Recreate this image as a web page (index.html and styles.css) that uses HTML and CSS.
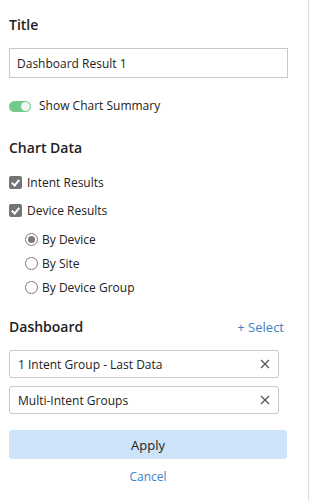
FILE: index.html
```html
<!DOCTYPE html>
<html lang="en">
<head>
    <meta charset="UTF-8">
    <meta name="viewport" content="width=device-width, initial-scale=1.0">
    <title>Chart Settings</title>
    <link rel="stylesheet" href="styles.css">
</head>
<body>
    <div class="settings-panel">
        <div class="section-title">Title</div>
        <input type="text" class="title-input" value="Dashboard Result 1">

        <label class="toggle-row">
            <span class="toggle on"><span class="toggle-knob"></span></span>
            Show Chart Summary
        </label>

        <div class="section-title chart-data-title">Chart Data</div>
        <div class="check-group">
            <label class="check-row">
                <span class="checkbox checked"></span>
                Intent Results
            </label>
            <label class="check-row">
                <span class="checkbox checked"></span>
                Device Results
            </label>
        </div>
        <div class="radio-group">
            <label class="radio-row">
                <span class="radio selected"></span>
                By Device
            </label>
            <label class="radio-row">
                <span class="radio"></span>
                By Site
            </label>
            <label class="radio-row">
                <span class="radio"></span>
                By Device Group
            </label>
        </div>

        <div class="dashboard-header">
            <div class="section-title">Dashboard</div>
            <a class="select-link" href="#">+ Select</a>
        </div>
        <div class="chip-list">
            <div class="chip">
                <span>1 Intent Group - Last Data</span>
                <svg class="chip-remove" width="10" height="10" viewBox="0 0 10 10">
                    <path d="M1 1 L9 9 M9 1 L1 9" stroke="#555" stroke-width="1.3" fill="none"/>
                </svg>
            </div>
            <div class="chip">
                <span>Multi-Intent Groups</span>
                <svg class="chip-remove" width="10" height="10" viewBox="0 0 10 10">
                    <path d="M1 1 L9 9 M9 1 L1 9" stroke="#555" stroke-width="1.3" fill="none"/>
                </svg>
            </div>
        </div>

        <button class="apply-button">Apply</button>
        <a class="cancel-link" href="#">Cancel</a>
    </div>
</body>
</html>
```

FILE: styles.css
```css
/* Base */
body {
    margin: 0;
    font-family: 'Open Sans', sans-serif;
    font-size: 12px;
    color: #222;
    background-color: #fff;
}

/* Side panel */
.settings-panel {
    width: 279px;
    height: 501px;
    padding: 15px 20px 0 9px;
    border-right: 1px solid #dedede;
    box-sizing: content-box;
    display: flex;
    flex-direction: column;
}

.section-title {
    font-size: 14px;
    font-weight: 600;
    line-height: 20px;
    color: #222;
}

.title-input {
    margin-top: 13px;
    height: 30px;
    width: 100%;
    box-sizing: border-box;
    border: 1px solid #c8c8c8;
    padding: 0 7px;
    font-family: 'Open Sans', sans-serif;
    font-size: 12px;
    color: #222;
    outline: none;
}

/* Toggle switch */
.toggle-row {
    margin-top: 19px;
    height: 18px;
    display: flex;
    align-items: center;
    gap: 8px;
    line-height: 18px;
}

.toggle {
    width: 22px;
    height: 11px;
    border-radius: 6px;
    background-color: #71cb8c;
    position: relative;
    flex-shrink: 0;
}

.toggle-knob {
    position: absolute;
    top: 1px;
    right: 1px;
    width: 9px;
    height: 9px;
    border-radius: 50%;
    background-color: #f4f4f4;
}

.chart-data-title {
    margin-top: 23px;
}

/* Checkboxes */
.check-group {
    margin-top: 10px;
    display: flex;
    flex-direction: column;
}

.check-row {
    height: 28px;
    display: flex;
    align-items: center;
    gap: 5px;
}

.checkbox {
    width: 13px;
    height: 13px;
    border-radius: 2px;
    background-color: #747474;
    position: relative;
    flex-shrink: 0;
}

.checkbox.checked::after {
    content: "";
    position: absolute;
    left: 4px;
    top: 2px;
    width: 3px;
    height: 6px;
    border: solid #fff;
    border-width: 0 2px 2px 0;
    transform: rotate(40deg);
}

/* Radios */
.radio-group {
    margin-top: 3px;
    padding-left: 16px;
    display: flex;
    flex-direction: column;
}

.radio-row {
    height: 24px;
    display: flex;
    align-items: center;
    gap: 4px;
}

.radio {
    width: 11px;
    height: 11px;
    border: 1px solid #7a7a7a;
    border-radius: 50%;
    position: relative;
    flex-shrink: 0;
}

.radio.selected::after {
    content: "";
    position: absolute;
    left: 2px;
    top: 2px;
    width: 7px;
    height: 7px;
    border-radius: 50%;
    background-color: #7a7a7a;
}

/* Dashboard list */
.dashboard-header {
    margin-top: 18px;
    padding-right: 4px;
    display: flex;
    justify-content: space-between;
    align-items: center;
}

.select-link {
    color: #3d82c4;
    text-decoration: none;
    font-size: 13px;
}

.chip-list {
    margin-top: 13px;
    width: 270px;
    display: flex;
    flex-direction: column;
    gap: 8px;
}

.chip {
    height: 28px;
    box-sizing: border-box;
    border: 1px solid #c8c8c8;
    border-radius: 3px;
    padding: 0 8px 0 8px;
    display: flex;
    justify-content: space-between;
    align-items: center;
}

.chip-remove {
    flex-shrink: 0;
}

/* Actions */
.apply-button {
    margin-top: 16px;
    width: 278px;
    height: 29px;
    border: none;
    border-radius: 3px;
    background-color: #cce3f8;
    color: #222;
    font-family: 'Open Sans', sans-serif;
    font-size: 13px;
}

.cancel-link {
    margin-top: 9px;
    width: 278px;
    text-align: center;
    color: #3d82c4;
    text-decoration: none;
    line-height: 18px;
}
```
